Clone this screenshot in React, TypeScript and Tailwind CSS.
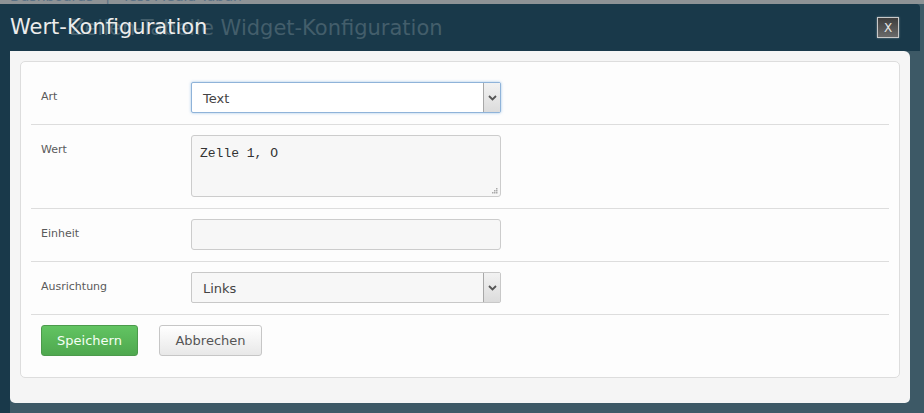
import { ReactNode } from 'react';

function Chevron() {
  return (
    <svg width="9" height="6" viewBox="0 0 9 6" className="block">
      <path d="M1 1 L4.5 4.5 L8 1" fill="none" stroke="#555" strokeWidth="1.8" />
    </svg>
  );
}

function SelectBox({ value, focused }: { value: string; focused?: boolean }) {
  return (
    <div
      className={
        focused
          ? 'w-[310px] h-[31px] flex border border-[#8fb3d9] rounded-[2px] bg-white shadow-[0_0_3px_rgba(100,160,220,0.6)]'
          : 'w-[310px] h-[31px] flex border border-[#c8c8c8] rounded-[2px] bg-[#f7f7f7]'
      }
    >
      <div className="flex-1 flex items-center pl-[11px] pt-[2px] text-[13px] text-[#444]">{value}</div>
      <div className="w-[17px] flex items-center justify-center border-l border-[#a8a8a8] bg-gradient-to-b from-[#f2f2f2] to-[#dcdcdc]">
        <Chevron />
      </div>
    </div>
  );
}

function FormRow({ label, first, children }: { label: string; first?: boolean; children: ReactNode }) {
  return (
    <div className={first ? 'flex pl-[10px] pt-[20px] pb-[11px] border-b border-[#dddddd]' : 'flex pl-[10px] pt-[10px] pb-[11px] border-b border-[#dddddd]'}>
      <div className="w-[150px] h-[31px] flex items-center text-[11px] text-[#5a5a5a]">{label}</div>
      {children}
    </div>
  );
}

export default function App() {
  return (
    <div className="w-[924px] h-[413px] bg-[#3d5966] overflow-hidden flex flex-col font-['DejaVu_Sans',sans-serif]">
      {/* page behind the overlay */}
      <div className="h-[4px] bg-[#8e9396] overflow-hidden shrink-0">
        <div className="flex gap-[12px] pl-[10px] -mt-[11px] text-[14px] leading-[14px] text-[#5b7185]">
          <span>Dashboards</span>
          <span>|</span>
          <span>Test Media Tabun</span>
        </div>
      </div>

      {/* header */}
      <div className="relative w-[920px] h-[47px] shrink-0 bg-[#19394a] rounded-tr-[4px] flex items-center pl-[10px] pr-[21px]">
        <span className="absolute left-[70px] top-[9px] text-[21px] text-[#435e6b] whitespace-nowrap">
          Zellen-Tabelle Widget-Konfiguration
        </span>
        <h3 className="relative text-[21px] text-[#ececec] whitespace-nowrap">Wert-Konfiguration</h3>
        <button className="ml-auto w-[22px] h-[21px] flex items-center justify-center border border-[#c9c9c9] bg-gradient-to-b from-[#3e3e3e] to-[#6a6a6a] text-[12px] leading-none text-[#e6e6e6] shadow-[0_0_2px_rgba(255,255,255,0.4)]">
          X
        </button>
      </div>

      <div className="flex flex-1">
        <div className="w-[10px] bg-[#19394a]" />
        <div className="w-[900px] h-[352px] bg-[#f5f5f5] rounded-b-[5px] rounded-tr-[6px] p-[10px]">
          <div className="h-[317px] bg-[#fdfdfd] border border-[#dddddd] rounded-[5px] px-[10px]">
            <FormRow label="Art" first>
              <SelectBox value="Text" focused />
            </FormRow>

            <FormRow label="Wert">
              <div className="relative w-[310px] h-[62px] border border-[#cccccc] rounded-[3px] bg-[#f7f7f7] pl-[8px] pt-[8px] font-['Liberation_Mono',monospace] text-[13px] text-[#333]">
                Zelle 1, O
                <svg width="6" height="6" viewBox="0 0 6 6" className="absolute right-[2px] bottom-[2px]">
                  <rect x="4" y="0" width="1.5" height="1.5" fill="#aaa" />
                  <rect x="2" y="2" width="1.5" height="1.5" fill="#aaa" />
                  <rect x="4" y="2" width="1.5" height="1.5" fill="#aaa" />
                  <rect x="0" y="4" width="1.5" height="1.5" fill="#aaa" />
                  <rect x="2" y="4" width="1.5" height="1.5" fill="#aaa" />
                  <rect x="4" y="4" width="1.5" height="1.5" fill="#aaa" />
                </svg>
              </div>
            </FormRow>

            <FormRow label="Einheit">
              <div className="w-[310px] h-[31px] border border-[#cccccc] rounded-[3px] bg-[#f7f7f7]" />
            </FormRow>

            <FormRow label="Ausrichtung">
              <SelectBox value="Links" />
            </FormRow>

            <div className="flex gap-[21px] pl-[10px] pt-[10px]">
              <button className="w-[97px] h-[31px] rounded-[3px] border border-[#4c9a4c] bg-gradient-to-b from-[#62c462] to-[#4fa84f] text-[13px] text-[#f4fff4]">
                Speichern
              </button>
              <button className="w-[103px] h-[31px] rounded-[3px] border border-[#c6c6c6] bg-gradient-to-b from-[#ffffff] to-[#e8e8e8] text-[13px] text-[#555]">
                Abbrechen
              </button>
            </div>
          </div>
        </div>
      </div>
    </div>
  );
}
